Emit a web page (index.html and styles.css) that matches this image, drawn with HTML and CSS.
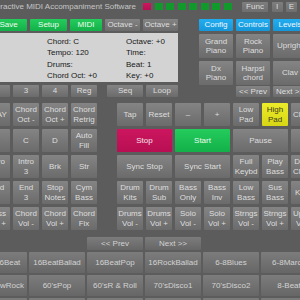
FILE: index.html
```html
<!DOCTYPE html>
<html lang="en">
<head>
    <meta charset="UTF-8">
    <meta name="viewport" content="width=device-width, initial-scale=1.0">
    <title>Interactive MIDI Accompaniment Software</title>
    <link rel="stylesheet" href="styles.css">
</head>
<body>
    <div class="header">
        <div class="title">Interactive MIDI Accompaniment Software</div>
        <div class="leds">
            <span class="led red"></span>
            <span class="led"></span>
            <span class="led"></span>
            <span class="led"></span>
            <span class="led"></span>
            <span class="led"></span>
            <span class="led"></span>
            <span class="led"></span>
        </div>
        <div class="sys">
            <div class="btn func">Func</div>
            <div class="btn small">I</div>
            <div class="btn small">E</div>
        </div>
    </div>

    <div class="top">
        <div class="left">
            <div class="menu">
                <div class="btn green w37">Save</div>
                <div class="btn green w37">Setup</div>
                <div class="btn green w32">MIDI</div>
                <div class="btn w35">Octave -</div>
                <div class="btn w35">Octave +</div>
            </div>
            <div class="panel">
                <div>Chord: C</div><div>Octave: +0</div>
                <div>Tempo: 120</div><div>Time:</div>
                <div>Drums:</div><div>Beat: 1</div>
                <div>Chord Oct: +0</div><div>Key: +0</div>
            </div>
            <div class="regs">
                <div class="btn w26">2</div>
                <div class="btn w26">3</div>
                <div class="btn w26">4</div>
                <div class="btn w26">Reg</div>
                <div class="btn seq">Seq</div>
                <div class="btn w32">Loop</div>
            </div>
        </div>
        <div class="right">
            <div class="tabs">
                <div class="btn blue">Config</div>
                <div class="btn blue">Controls</div>
                <div class="btn blue">Levels</div>
            </div>
            <div class="inst">
                <div class="btn">Grand<br>Piano</div>
                <div class="btn">Rock<br>Piano</div>
                <div class="btn">Upright</div>
                <div class="btn">Dx<br>Piano</div>
                <div class="btn">Harpsi<br>chord</div>
                <div class="btn">Clav</div>
            </div>
            <div class="nav">
                <div class="btn col2">&lt;&lt; Prev</div>
                <div class="btn">Next &gt;&gt;</div>
            </div>
        </div>
    </div>

    <div class="pads">
        <div class="grid4">
            <div class="btn">PLAY</div>
            <div class="btn">Chord<br>Oct -</div>
            <div class="btn">Chord<br>Oct +</div>
            <div class="btn">Chord<br>Retrig</div>

            <div class="btn">B</div>
            <div class="btn">C</div>
            <div class="btn">D</div>
            <div class="btn">Auto<br>Fill</div>

            <div class="btn">Intro<br>2</div>
            <div class="btn">Intro<br>3</div>
            <div class="btn">Brk</div>
            <div class="btn">Str</div>

            <div class="btn">End<br>2</div>
            <div class="btn">End<br>3</div>
            <div class="btn">Stop<br>Notes</div>
            <div class="btn">Cym<br>Bass</div>

            <div class="btn">Bass<br>Vol +</div>
            <div class="btn">Chord<br>Vol -</div>
            <div class="btn">Chord<br>Vol +</div>
            <div class="btn">Chord<br>Fix</div>
        </div>
        <div class="grid7">
            <div class="btn">Tap</div>
            <div class="btn">Reset</div>
            <div class="btn">&ndash;</div>
            <div class="btn">+</div>
            <div class="btn">Low<br>Pad</div>
            <div class="btn yellow">High<br>Pad</div>
            <div class="btn">Chord</div>

            <div class="btn red span2">Stop</div>
            <div class="btn green span2">Start</div>
            <div class="btn span2">Pause</div>
            <div class="btn"></div>

            <div class="btn span2">Sync Stop</div>
            <div class="btn span2">Sync Start</div>
            <div class="btn">Full<br>Keybd</div>
            <div class="btn">Play<br>Bass</div>
            <div class="btn">Drum<br>Chord</div>

            <div class="btn">Drum<br>Kits</div>
            <div class="btn">Drum<br>Sub</div>
            <div class="btn">Bass<br>Only</div>
            <div class="btn">Bass<br>Inv</div>
            <div class="btn">Low<br>Bass</div>
            <div class="btn">Sus<br>Bass</div>
            <div class="btn">Keys</div>

            <div class="btn">Drums<br>Vol -</div>
            <div class="btn">Drums<br>Vol +</div>
            <div class="btn">Solo<br>Vol -</div>
            <div class="btn">Solo<br>Vol +</div>
            <div class="btn">Strngs<br>Vol -</div>
            <div class="btn">Strngs<br>Vol +</div>
            <div class="btn">Upper<br>Vol -</div>
        </div>
    </div>

    <div class="rhythm">
        <div class="btn col3">&lt;&lt; Prev</div>
        <div class="btn">Next &gt;&gt;</div>

        <div class="btn style first">Slow16Beat</div>
        <div class="btn style">16BeatBallad</div>
        <div class="btn style">16BeatPop</div>
        <div class="btn style">16RockBallad</div>
        <div class="btn style">6-8Blues</div>
        <div class="btn style">6-8March</div>

        <div class="btn style">50'sSlowRock</div>
        <div class="btn style">60'sPop</div>
        <div class="btn style">60'sR &amp; Roll</div>
        <div class="btn style">70'sDisco1</div>
        <div class="btn style">70'sDisco2</div>
        <div class="btn style">8-Beat</div>

        <div class="btn style">8BeatPop</div>
        <div class="btn style">8BeatRock</div>
        <div class="btn style">Ballad</div>
        <div class="btn style">BigBand</div>
        <div class="btn style">Bossa</div>
        <div class="btn style">Country</div>
    </div>
</body>
</html>
```

FILE: styles.css
```css
* {
    box-sizing: border-box;
}
html, body {
    margin: 0;
}
body {
    width: 300px;
    height: 300px;
    overflow: hidden;
    background-color: #5c5c5c;
    font-family: "Liberation Sans", Arial, sans-serif;
    font-size: 8px;
    color: #dcdcdc;
}
.btn {
    display: flex;
    align-items: center;
    justify-content: center;
    text-align: center;
    flex-shrink: 0;
    white-space: nowrap;
    line-height: 9.5px;
    color: #dedede;
    background: linear-gradient(#848484, #6b6b6b);
    border-radius: 1px;
}
.green {
    background: linear-gradient(#24cc5c, #13b049);
    color: #eefcef;
}
.blue {
    background: linear-gradient(#22adf0, #1597d9);
    color: #f2f8ff;
}
.red {
    background: linear-gradient(#cc165f, #b80f52);
    color: #f4e4ea;
}
.yellow {
    background: linear-gradient(#ecec2a, #d6d614);
    color: #3c3c20;
}

/* title strip */
.header {
    display: flex;
    align-items: flex-start;
    height: 17px;
}
.title {
    flex-shrink: 0;
    width: 156px;
    margin-left: -13px;
    padding-top: 3px;
    line-height: 8px;
    color: #c6c6c6;
    white-space: nowrap;
}
.leds {
    display: flex;
    gap: 3.5px;
    margin-top: 3px;
}
.led {
    width: 8px;
    height: 7px;
    background-color: #119a2b;
}
.led.red {
    background-color: #a81515;
}
.sys {
    display: flex;
    gap: 3.5px;
    margin: 2px 3px 0 auto;
}
.sys .btn {
    height: 10px;
    background: linear-gradient(#7e7e7e, #6e6e6e);
}
.func { width: 26px; }
.small { width: 11px; }

/* upper block */
.top {
    display: flex;
    margin-top: 2px;
}
.left {
    flex-shrink: 0;
    width: 194px;
    margin-left: -16px;
}
.menu {
    display: flex;
    gap: 3px;
    height: 12px;
    padding-left: 6px;
}
.w37 { width: 37px; }
.w35 { width: 35px; }
.w32 { width: 32px; }
.w26 { width: 26px; }
.panel {
    display: grid;
    grid-template-columns: 79px 1fr;
    align-content: start;
    height: 49px;
    margin-top: 2px;
    padding: 3px 0 0 63px;
    line-height: 11.3px;
    background-color: #d3d3d3;
    color: #181818;
}
.regs {
    display: flex;
    gap: 3px;
    height: 12px;
    margin-top: 3px;
}
.seq {
    width: 36px;
    margin-left: 7px;
}
.right {
    flex-shrink: 0;
    margin-left: 21px;
}
.tabs {
    display: flex;
    gap: 3px;
    height: 12px;
}
.tabs .btn {
    width: 34px;
}
.inst {
    display: grid;
    grid-template-columns: repeat(3, 34px);
    grid-auto-rows: 24px;
    gap: 3px;
    margin-top: 3px;
}
.nav {
    display: grid;
    grid-template-columns: repeat(3, 34px);
    grid-template-rows: 11px;
    gap: 3px;
    margin-top: 1px;
}
.col2 { grid-column: 2; }

/* pads */
.pads {
    display: flex;
    gap: 20px;
    margin: 6px 0 0 -16px;
}
.grid4, .grid7 {
    display: grid;
    grid-template-rows: repeat(5, 23px);
    gap: 3px;
    flex-shrink: 0;
}
.grid4 {
    grid-template-columns: repeat(4, 26px);
}
.grid7 {
    grid-template-columns: repeat(7, 26px);
}
.span2 { grid-column: span 2; }

/* rhythms */
.rhythm {
    display: grid;
    grid-template-columns: repeat(6, 56px);
    grid-template-rows: 13px repeat(3, 21px);
    gap: 2px;
    width: 346px;
    margin: 7px 0 0 -29px;
}
.rhythm .btn {
    color: #d2d2d2;
    background: linear-gradient(#7c7c7c, #666666);
}
.col3 { grid-column: 3; }
.first { grid-column-start: 1; }
```
